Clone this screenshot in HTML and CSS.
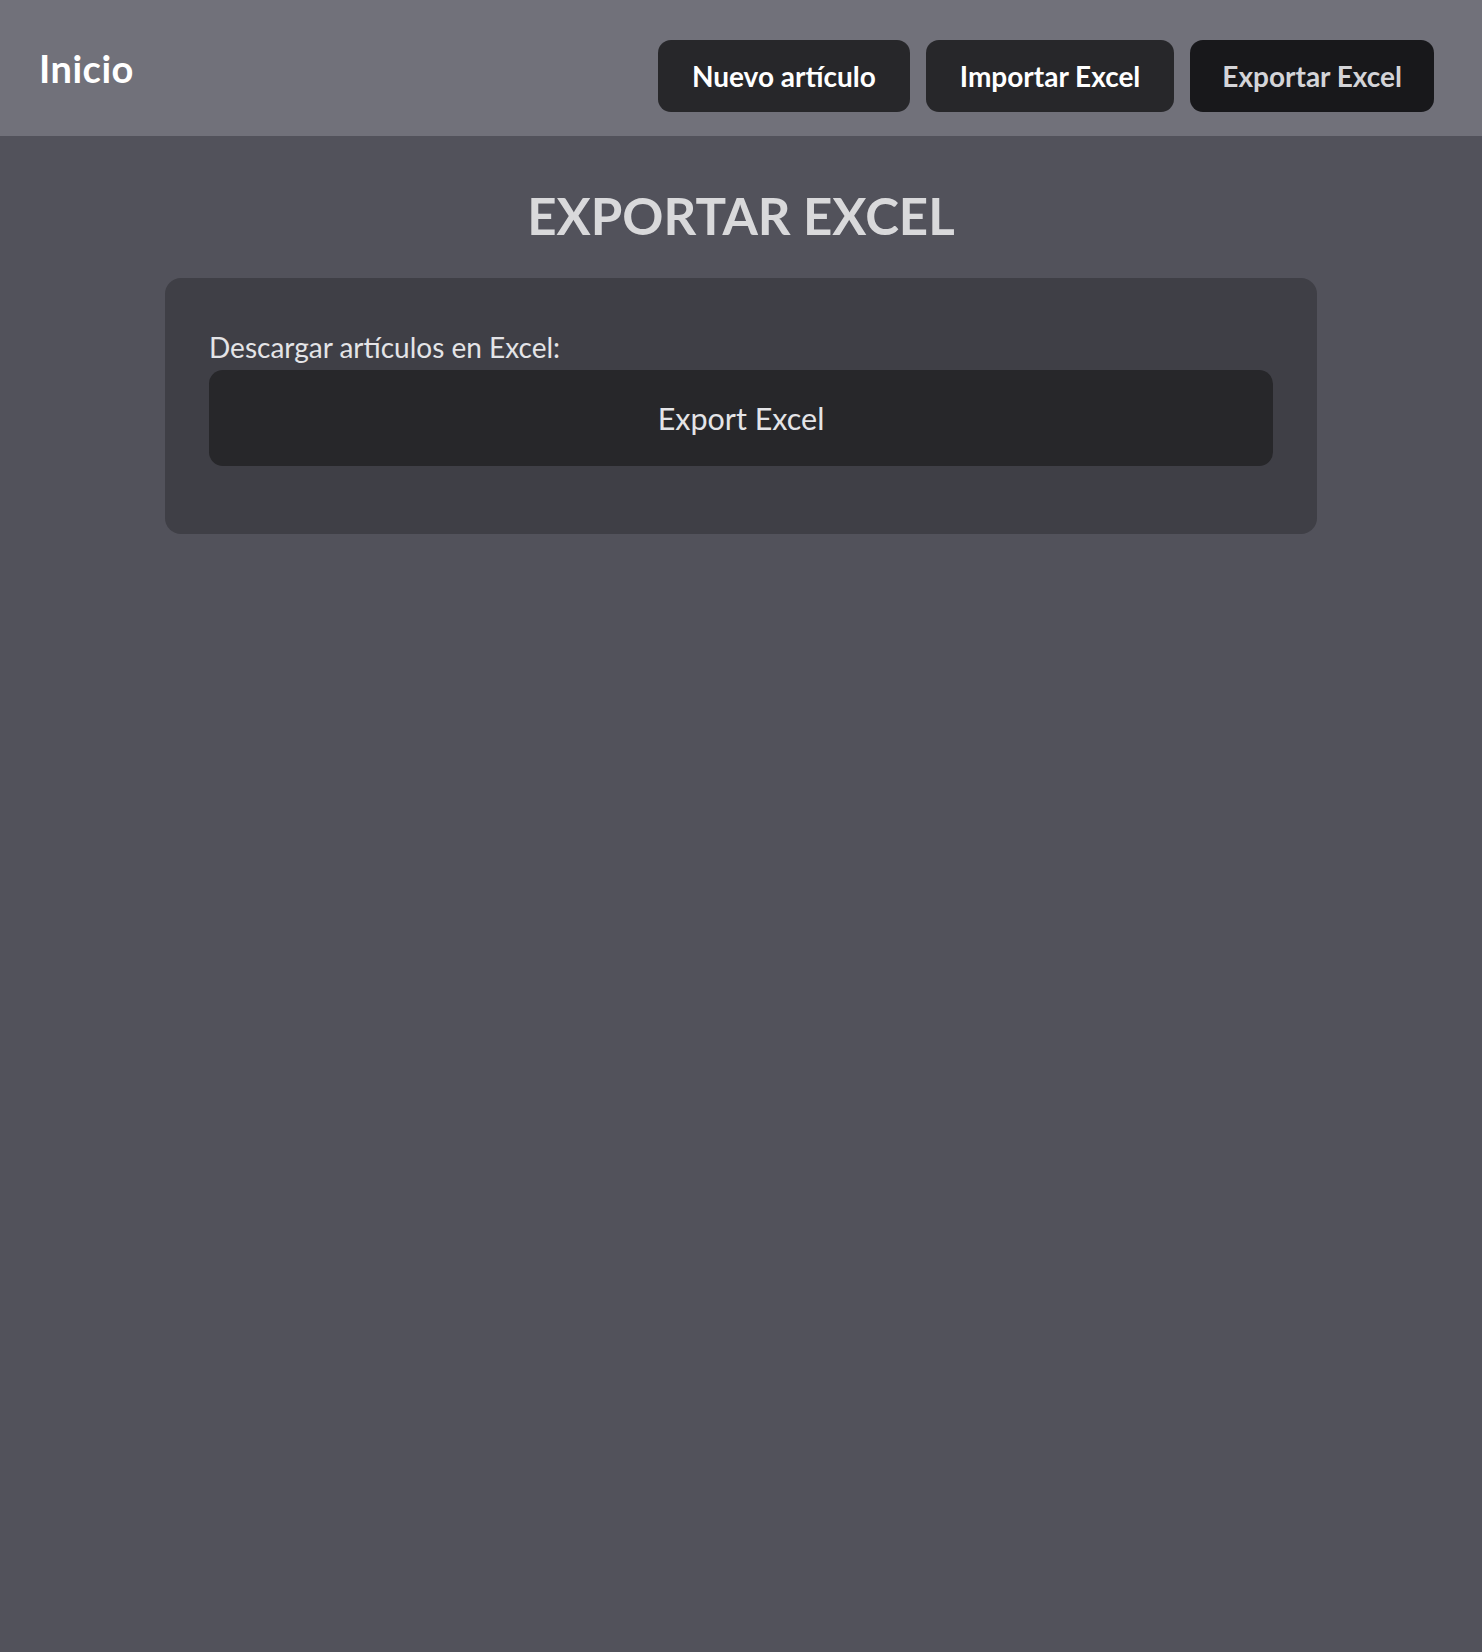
FILE: index.html
```html
<!DOCTYPE html>
<html lang="es">
<head>
<meta charset="utf-8">
<title>Exportar Excel</title>
<link rel="stylesheet" href="styles.css">
</head>
<body>
<header class="topbar">
  <a class="brand" href="#">Inicio</a>
  <nav class="nav">
    <a class="nav-btn" href="#">Nuevo artículo</a>
    <a class="nav-btn" href="#">Importar Excel</a>
    <a class="nav-btn nav-btn-active" href="#">Exportar Excel</a>
  </nav>
</header>
<main class="main">
  <h1 class="title">EXPORTAR EXCEL</h1>
  <section class="card">
    <p class="label">Descargar artículos en Excel:</p>
    <button class="export-btn" type="button">Export Excel</button>
  </section>
</main>
</body>
</html>
```
FILE: styles.css
```css
* { box-sizing: border-box; }

html, body {
  margin: 0;
  padding: 0;
}

body {
  min-height: 100vh;
  background: #52525b;
  font-family: "Lato", "Open Sans", sans-serif;
  color: #e4e4e7;
}

.topbar {
  height: 136px;
  background: #71717a;
  display: flex;
  align-items: center;
  justify-content: space-between;
  padding: 0 48px 0 39px;
}

.brand {
  font-size: 38px;
  line-height: 36px;
  letter-spacing: 0.5px;
  font-weight: 700;
  color: #ffffff;
  text-decoration: none;
}

.nav {
  display: flex;
  gap: 16px;
  margin-top: 16px;
}

.nav-btn {
  display: block;
  height: 72px;
  line-height: 72px;
  padding: 0 34px;
  border-radius: 13px;
  background: #27272a;
  color: #ffffff;
  font-size: 28px;
  font-weight: 700;
  text-decoration: none;
  white-space: nowrap;
}

.nav-btn-active {
  background: #18181b;
  color: #d4d4d8;
  padding: 0 32px;
}

.main {
  padding: 55px 0 40px;
}

.title {
  margin: 0 0 37px;
  text-align: center;
  font-size: 51px;
  line-height: 50px;
  font-weight: 700;
  color: #d9d9db;
}

.card {
  width: 1152px;
  margin: 0 auto;
  background: #3f3f46;
  border-radius: 16px;
  padding: 53px 44px 68px 44px;
}

.label {
  margin: 0 0 6px;
  font-size: 28px;
  line-height: 33px;
  color: #e4e4e7;
}

.export-btn {
  display: block;
  width: 100%;
  height: 96px;
  border: 0;
  border-radius: 14px;
  background: #27272a;
  color: #e4e4e7;
  font-family: inherit;
  font-size: 30.5px;
  line-height: 96px;
  padding: 0;
  text-align: center;
  cursor: pointer;
}
```
